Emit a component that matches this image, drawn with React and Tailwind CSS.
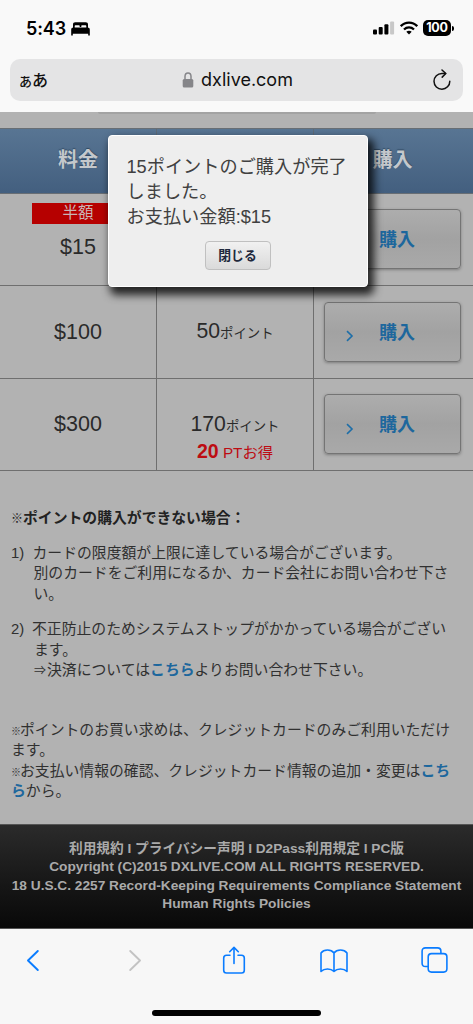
const plans = [
  { price: "$15", badge: "半額", points: null, bonus: null },
  { price: "$100", badge: null, points: "50", bonus: null },
  { price: "$300", badge: null, points: "170", bonus: "20" },
];

function StatusBar() {
  return (
    <div className="flex h-[59px] items-start justify-between pl-[26px] pr-[19px] pt-[17px]">
      <div className="flex items-center gap-[5px]">
        <span className="font-['Inter','Liberation_Sans',sans-serif] text-[18px] font-semibold leading-[24px] tracking-[-0.1px]">
          5:43
        </span>
        <svg width="19" height="14" viewBox="0 0 19 14" className="-mt-px">
          <path
            d="M2 6V2.600C2 1 2.800.3 4.300.3h10.400c1.500 0 2.300.7 2.300 2.300V6h-1.700V4.300c0-.7-.4-1-1-1h-3c-.7 0-1 .3-1 1V5H8.700V4.300c0-.7-.3-1-1-1h-3c-.6 0-1 .3-1 1V6z"
            fill="#000"
          />
          <path
            d="M2.500 5.500h14c1.500 0 2.300.9 2.300 2.300v5.700h-1.600v-1.800H1.800v1.800H.2V7.800c0-1.400.8-2.300 2.300-2.300z"
            fill="#000"
          />
        </svg>
      </div>
      <div className="flex h-[22px] items-center">
        <svg width="22" height="14" viewBox="0 0 22 14">
          <rect x="0" y="8.500" width="4" height="5" rx="1" />
          <rect x="5.700" y="6" width="4" height="7.500" rx="1" />
          <rect x="11.400" y="3.200" width="4" height="10.300" rx="1" />
          <rect x="17.100" y=".6" width="4" height="12.900" rx="1" fill="#c8c8c8" />
        </svg>
        <svg width="18" height="14" viewBox="0 0 18 14" className="ml-[5px]">
          <g fill="none" stroke="#000" strokeWidth="2.300">
            <path d="M.8 5.200C5.400.5 12.600.5 17.200 5.200" />
            <path d="M4 8.500c2.900-2.800 7.100-2.800 10 0" />
          </g>
          <path d="M9 13.500 6.300 10.800c1.500-1.400 3.900-1.400 5.400 0z" />
        </svg>
        <div className="ml-[5px] flex h-[16px] w-[28px] items-center justify-center rounded-[5px] bg-black font-['Inter','Liberation_Sans',sans-serif] text-[12.500px] font-bold leading-none tracking-[-0.2px] text-white">
          100
        </div>
        <div className="ml-[1px] h-[5px] w-[2px] rounded-r-full bg-black" />
      </div>
    </div>
  );
}

function AddressBar() {
  return (
    <div className="mx-[10px] flex h-[42px] items-center justify-between rounded-[10px] bg-[#e4e4e5] pl-[9px] pr-[11px]">
      <div className="flex w-[40px] items-baseline font-['Noto_Sans_CJK_JP',sans-serif] font-medium leading-[24px] text-[#111]">
        <span className="text-[13px]">あ</span>
        <span className="text-[16px]">あ</span>
      </div>
      <div className="flex items-center gap-[7px] pl-[4px]">
        <svg width="12" height="16" viewBox="0 0 12 16">
          <path d="M3 8V4.500a3 3.500 0 0 1 6 0V8" fill="none" stroke="#858589" strokeWidth="1.500" />
          <rect x=".7" y="7" width="10.600" height="8.500" rx="1.500" fill="#858589" />
        </svg>
        <span className="font-['Inter','Liberation_Sans',sans-serif] text-[18px] leading-[24px] text-[#111]">
          dxlive.com
        </span>
      </div>
      <div className="flex w-[40px] justify-end">
        <svg width="20" height="22" viewBox="0 0 20 22" fill="none" stroke="#111" strokeWidth="1.500" strokeLinecap="round" strokeLinejoin="round">
          <path d="M17.800 12.200a7.900 7.900 0 1 1-7.900-7.800h3.600" />
          <path d="m10 1 3.800 3.500-3.600 3.600" />
        </svg>
      </div>
    </div>
  );
}

function BuyButton() {
  return (
    <button className="flex h-[60px] w-[137px] items-center rounded-[4px] border-[1.500px] border-[#747474] bg-linear-to-b from-[#adadad] via-[#a2a2a2] to-[#a9a9a9] pl-[21px] shadow-[0_1px_3px_rgba(0,0,0,0.3)]">
      <svg width="8" height="12" viewBox="0 0 8 12" className="mt-[9px]" fill="none" stroke="#1d6ea8" strokeWidth="1.600">
        <path d="m1 1.200 5 4.800-5 4.800" />
      </svg>
      <span className="ml-[25px] mt-[2px] text-[18px] font-bold leading-[24px] text-[#1d679d]">購入</span>
    </button>
  );
}

function PlanRow({ plan }) {
  return (
    <div className="flex h-[92.500px] border-b border-[#6f6f6f]">
      <div className="flex w-[157px] flex-col items-center justify-center border-r border-[#6f6f6f]">
        {plan.badge && (
          <div className="mb-[10px] h-[21px] w-[92px] bg-[#b60000] text-center text-[15.500px] leading-[20px] text-[#c9b5b5]">
            {plan.badge}
          </div>
        )}
        <div className={plan.badge ? "mb-[16px] h-[26px] text-[21.500px] leading-[26px]" : "text-[21.500px] leading-[26px]"}>
          {plan.price}
        </div>
      </div>
      <div className="flex w-[157px] flex-col items-center justify-center border-r border-[#6f6f6f]">
        {plan.points && (
          <div className={plan.bonus ? "mt-[26px] h-[28px] leading-[27px]" : "h-[29px] leading-[27px]"}>
            <span className="text-[21.200px]">{plan.points}</span>
            <span className="text-[13.400px]">ポイント</span>
          </div>
        )}
        {plan.bonus && (
          <div className="h-[27px] text-[15.300px] leading-[27px] text-[#bd0c12]">
            <b className="text-[19.500px]">{plan.bonus}</b> PTお得
          </div>
        )}
      </div>
      <div className="flex flex-1 items-center pl-[10px]">
        <BuyButton />
      </div>
    </div>
  );
}

function Link({ children }) {
  return <a className="font-bold text-[#1d679d]">{children}</a>;
}

function Mark() {
  return <span className="inline-block w-[9px] text-[10px] font-bold leading-none">※</span>;
}

function Notes() {
  return (
    <div className="h-[353px] whitespace-nowrap pl-[11px] pt-[37px] text-[14.830px] leading-[20.500px] text-[#303030]">
      <p className="font-bold text-[#222]">
        <span className="inline-block w-[12px] text-[12px] font-black leading-none">※</span>
        ポイントの購入ができない場合：
      </p>
      <div className="mt-[14px] flex">
        <span className="w-[21.500px]">1)</span>
        <p>
          カードの限度額が上限に達している場合がございます。
          <br />
          <span className="pl-px">別のカードをご利用になるか、カード会社にお問い合わせ下さ</span>
          <br />
          <span className="pl-px">い。</span>
        </p>
      </div>
      <div className="mt-[15px] flex">
        <span className="w-[21px]">2)</span>
        <p>
          不正防止のためシステムストップがかかっている場合がござい
          <br />
          <span className="pl-[2px]">ます。</span>
          <br />
          <span className="ml-[2px] inline-block w-[13px] text-[12px]">⇒</span>
          決済については<Link>こちら</Link>よりお問い合わせ下さい。
        </p>
      </div>
      <p className="mt-[38px]">
        <Mark />
        ポイントのお買い求めは、クレジットカードのみご利用いただけ
        <br />
        ます。
        <br />
        <Mark />
        お支払い情報の確認、クレジットカード情報の追加・変更は<Link>こち</Link>
        <br />
        <Link>ら</Link>から。
      </p>
    </div>
  );
}

function PurchaseDialog() {
  return (
    <div className="absolute left-[108px] top-[23px] h-[152px] w-[260px] rounded-[4px] border-[1.500px] border-white bg-[#eee] pl-[17.500px] pt-[19px] text-[18.200px] leading-[25px] text-[#404040] shadow-[4px_6px_8px_2px_rgba(0,0,0,0.8)]">
      <p className="whitespace-nowrap">
        15ポイントのご購入が完了
        <br />
        しました。
        <br />
        お支払い金額:$15
      </p>
      <div className="mt-[11px] flex pl-[78px]">
        <button className="h-[29px] w-[66px] rounded-[4px] border-[1.500px] border-[#c0c0c0] bg-linear-to-b from-[#f1f1f1] to-[#dadada] text-[12.800px] font-bold leading-[26px] text-[#20283c]">
          閉じる
        </button>
      </div>
    </div>
  );
}

function Footer() {
  return (
    <div className="h-[105px] whitespace-nowrap border-y border-[#555] bg-linear-to-b from-[#2b2b2b] to-[#090909] pt-[15px] text-center text-[13.700px] font-bold leading-[18.400px] text-[#aaa]">
      <p>利用規約 I プライバシー声明 I D2Pass利用規定 I PC版</p>
      <p>Copyright (C)2015 DXLIVE.COM ALL RIGHTS RESERVED.</p>
      <p>18 U.S.C. 2257 Record-Keeping Requirements Compliance Statement</p>
      <p>Human Rights Policies</p>
    </div>
  );
}

function BrowserToolbar() {
  return (
    <div className="flex h-[96px] flex-col items-center bg-[#f7f7f7]">
      <div className="flex w-full items-start pl-[26px] pt-[16px]">
        <svg width="14" height="28" viewBox="0 0 14 28" fill="none" stroke="#0a7cff" strokeWidth="1.900" strokeLinecap="round" strokeLinejoin="round">
          <path d="M11.800 6 2 15.500l9.800 9.500" />
        </svg>
        <svg width="14" height="28" viewBox="0 0 14 28" className="ml-[88px]" fill="none" stroke="#c3c3c3" strokeWidth="1.900" strokeLinecap="round" strokeLinejoin="round">
          <path d="m2.200 6 9.800 9.500L2.200 25" />
        </svg>
        <svg width="24" height="30" viewBox="0 0 24 30" className="ml-[80px]" fill="none" stroke="#0a7cff" strokeWidth="1.600" strokeLinecap="round" strokeLinejoin="round">
          <path d="M8 10.200H4.500c-2 0-2.800 1-2.800 2.800v12.200c0 2 .8 2.800 2.800 2.800h15c2 0 2.800-.8 2.800-2.800V13c0-1.800-.8-2.800-2.800-2.800H16" />
          <path d="M12 18.500V2.500M7.700 6.700 12 2.400l4.300 4.300" />
        </svg>
        <svg width="30" height="28" viewBox="0 0 30 28" className="ml-[73px]" fill="none" stroke="#0a7cff" strokeWidth="1.600" strokeLinecap="round" strokeLinejoin="round">
          <path d="M15 8v18.400c-3.300-3-9.500-3.200-13 0V8c3-4 10-4 13 0 3-4 10-4 13 0v18.400c-3.500-3.200-9.700-3-13 0" />
        </svg>
        <svg width="27" height="28" viewBox="0 0 27 28" className="ml-[72px]" fill="none" stroke="#0a7cff" strokeWidth="1.600">
          <path d="M7 21.500H4.500c-2.300 0-3.400-1-3.400-3.200V6.200c0-2.200 1.100-3.300 3.400-3.300h12c2.300 0 3.400 1.100 3.400 3.300v2.500" />
          <rect x="7.200" y="8.600" width="18.700" height="18.500" rx="3.300" />
        </svg>
      </div>
      <div className="mt-auto mb-[9px] h-[6px] w-[169px] rounded-full bg-black" />
    </div>
  );
}

export default function App() {
  return (
    <div className="h-[1024px] w-[473px] overflow-hidden bg-[#b2b2b2] font-['Liberation_Sans','Noto_Sans_CJK_JP',sans-serif] text-[#2a2a2a]">
      <div className="h-[112px] bg-[#f9f9f9] text-black">
        <StatusBar />
        <AddressBar />
      </div>
      <div className="relative">
        <div className="flex h-[16px] justify-center">
          <div className="h-[2px] w-[278px] rounded-b-full bg-[#a3a3a3]" />
        </div>
        <div className="flex h-[65.500px] border-y border-[#686e74] bg-linear-to-b from-[#587593] to-[#435f7f] text-center text-[20px] font-bold leading-[63px] text-[#c4c8cc] [text-shadow:0_-1px_1px_#304861]">
          <div className="w-[157px] border-r border-[#5f6b77]">料金</div>
          <div className="w-[157px] border-r border-[#5f6b77]" />
          <div className="flex-1 pr-[2px]">購入</div>
        </div>
        {plans.map((plan) => (
          <PlanRow key={plan.price} plan={plan} />
        ))}
        <PurchaseDialog />
      </div>
      <Notes />
      <Footer />
      <BrowserToolbar />
    </div>
  );
}
